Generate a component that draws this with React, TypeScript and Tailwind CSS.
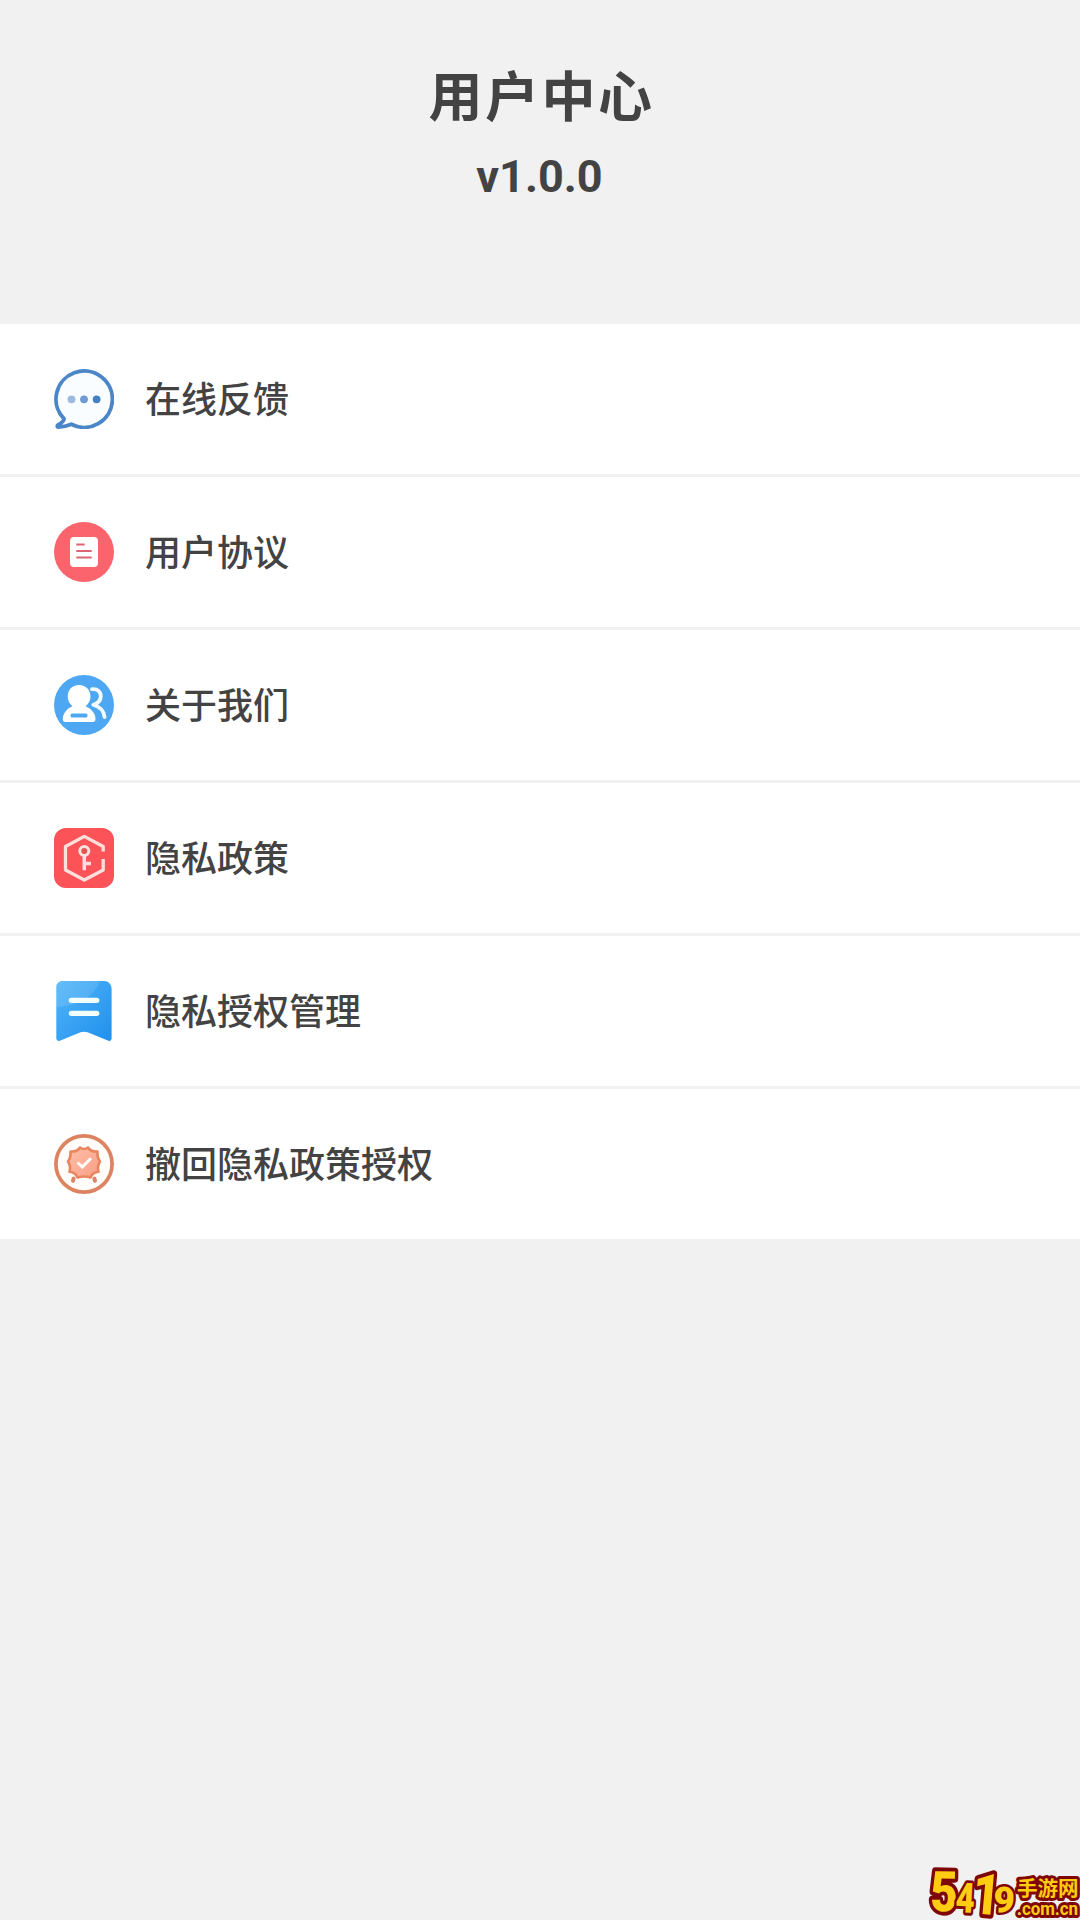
import type { ReactNode } from "react";

type MenuItem = { id: string; label: string; icon: ReactNode };

function FeedbackIcon() {
  return (
    <svg viewBox="0 0 60 60" className="h-[60px] w-[60px] shrink-0" fill="none">
      <path
        d="M10.1 49.9 A28.2 28.2 0 1 1 17.3 55.2 C13 57 8 58 4.4 58 C2.8 57.9 3 56.6 4.4 55.7 C7.5 53.9 10 52.5 10.1 49.9 Z"
        fill="#f9fdff"
        stroke="#4a86c8"
        strokeWidth="3.8"
        strokeLinejoin="round"
      />
      <circle cx="17.5" cy="30.3" r="3.9" fill="#9db9e2" />
      <circle cx="30" cy="30.3" r="3.9" fill="#6f9bd3" />
      <circle cx="42.6" cy="30.3" r="3.9" fill="#4680c4" />
    </svg>
  );
}

function AgreementIcon() {
  return (
    <svg viewBox="0 0 60 60" className="h-[60px] w-[60px] shrink-0" fill="none">
      <circle cx="30" cy="30" r="30" fill="#fb646c" />
      <rect x="16" y="15" width="28" height="30" rx="4" fill="#fff" />
      <path d="M22.3 22.5h8.4M22.3 29h15.4M22.3 35.5h15.4" stroke="#dc6472" strokeWidth="1.9" />
    </svg>
  );
}

function AboutIcon() {
  return (
    <svg viewBox="0 0 60 60" className="h-[60px] w-[60px] shrink-0" fill="none">
      <circle cx="30" cy="30" r="30" fill="#4ea7f2" />
      <path
        d="M25 10 C32 10 36.5 15 36.5 21.5 C36.5 25.5 34.5 29 31.5 31.3 C37 33.5 41.5 38 41.5 44 C41.5 46 40.6 47 38.8 47 H11.5 C9.6 47 8.8 46 8.8 44 C9 38 13 33.5 18.5 31.3 C15.5 29 13.7 25.5 13.7 21.5 C13.7 15 18 10 25 10 Z"
        fill="#fff"
      />
      <rect x="16.5" y="38.5" width="17" height="4" rx="1.6" fill="#4ea7f2" />
      <path
        d="M38 14.2 C43.5 13.4 46.8 17 46.8 21.3 C46.8 25.6 44 28.3 39.3 29.8 C46 31.8 50 36 50.6 42"
        stroke="#f5fbff"
        strokeWidth="3.8"
        strokeLinecap="round"
        strokeLinejoin="round"
      />
    </svg>
  );
}

function PrivacyIcon() {
  return (
    <svg viewBox="0 0 60 60" className="h-[60px] w-[60px] shrink-0" fill="none">
      <rect width="60" height="60" rx="12" fill="#fb5358" />
      <path
        d="M49.2 23.5 V18.5 L30.3 8.4 L11.5 18.5 V42 L30.3 52 L49.2 42 V31"
        stroke="#ffe0dd"
        strokeWidth="3.3"
        strokeLinejoin="round"
      />
      <circle cx="30.3" cy="23" r="4.5" fill="#e05550" stroke="#ffe0dd" strokeWidth="3" />
      <path d="M30.3 28 V42.3 M30.3 35.5 H37" stroke="#ffe0dd" strokeWidth="3.5" />
    </svg>
  );
}

function ManageIcon() {
  return (
    <svg viewBox="0 0 60 60" className="h-[60px] w-[60px] shrink-0" fill="none">
      <defs>
        <linearGradient id="ribbon" x1="0" y1="0" x2="1" y2="1">
          <stop offset="0" stopColor="#50b5f8" />
          <stop offset="1" stopColor="#2090ee" />
        </linearGradient>
      </defs>
      <path
        d="M8.5 0 H50 C54.5 0 57.6 3.5 57.6 8 V57 C57.6 59.5 56 60.5 53.8 59.5 L33.5 51.3 Q30 50 26.5 51.3 L6.5 59.5 C4.3 60.5 2.3 59.5 2.3 57 V6 C2.3 2.5 5 0 8.5 0 Z"
        fill="url(#ribbon)"
      />
      <path d="M2.3 26 C24 25 40 16 46 0 H8.5 C5 0 2.3 2.5 2.3 6 Z" fill="#fff" fillOpacity=".12" />
      <path d="M17.3 19.3 H42.8 M17.3 32.3 H42.8" stroke="#f2fffb" strokeWidth="5.2" strokeLinecap="round" />
    </svg>
  );
}

function RevokeIcon() {
  return (
    <svg viewBox="0 0 60 60" className="h-[60px] w-[60px] shrink-0" fill="none">
      <defs>
        <linearGradient id="seal" x1="0" y1="0" x2="1" y2="1">
          <stop offset="0" stopColor="#fcc0a8" />
          <stop offset="1" stopColor="#fb9c86" />
        </linearGradient>
      </defs>
      <circle cx="30" cy="30" r="28.1" fill="#fffcfa" stroke="#dc8462" strokeWidth="3.7" />
      <path
        d="M26 13.5 Q30 16.5 34 13.5 Q36.500 18 43.500 17.500 Q43 23.500 46 27.500 Q43 32 44.500 37.800 Q38.500 38.500 36.500 43.500 Q30 41.500 23.500 43.500 Q21.500 38.500 15.500 37.800 Q17 32 14 27.500 Q17 23.500 16.500 17.500 Q23.500 18 26 13.500 Z"
        fill="url(#seal)"
        stroke="#e8855f"
        strokeWidth="2.6"
        strokeLinejoin="round"
      />
      <path d="M23.5 28.5 L28.3 33 L37 24.3" stroke="#fff" strokeWidth="3" />
      <path d="M19.6 44.6 L19 46.8 M40.4 44.6 L41 46.8" stroke="#dc8462" strokeWidth="4" strokeLinecap="round" />
    </svg>
  );
}

const ITEMS: MenuItem[] = [
  { id: "feedback", label: "在线反馈", icon: <FeedbackIcon /> },
  { id: "agreement", label: "用户协议", icon: <AgreementIcon /> },
  { id: "about", label: "关于我们", icon: <AboutIcon /> },
  { id: "privacy", label: "隐私政策", icon: <PrivacyIcon /> },
  { id: "manage", label: "隐私授权管理", icon: <ManageIcon /> },
  { id: "revoke", label: "撤回隐私政策授权", icon: <RevokeIcon /> },
];

// Each digit is stretched and tilted on its own for the hand-cut look.
const DIGITS = [
  { char: "5", transform: "translate(2 45) rotate(1) scale(.95 1.12)" },
  { char: "4", transform: "translate(27 46) rotate(3) scale(.66 .83)" },
  { char: "1", transform: "translate(43 47) rotate(5) scale(.95 1.14)" },
  { char: "9", transform: "translate(65 46) rotate(2) scale(.74 .72)" },
];

function SiteMark() {
  return (
    <svg
      viewBox="0 0 152 54"
      className="absolute right-0 bottom-0 h-[54px] w-[152px] overflow-visible"
      fill="#ffcc12"
      stroke="#7d0709"
      strokeLinejoin="round"
      paintOrder="stroke"
      fontFamily="Roboto, sans-serif"
      fontWeight="900"
    >
      {DIGITS.map((d) => (
        <text key={d.char} transform={d.transform} fontSize="50" strokeWidth="7">
          {d.char}
        </text>
      ))}
      <g strokeWidth="6">
        <text x="89" y="30" fontSize="20.5" fontFamily="'Noto Sans CJK SC', sans-serif" fontWeight="700">
          手游网
        </text>
        <text x="89" y="48.5" fontSize="18" textLength="61" lengthAdjust="spacingAndGlyphs" fontWeight="700">
          .com.cn
        </text>
      </g>
    </svg>
  );
}

export default function App() {
  return (
    <div className="relative flex min-h-[1920px] w-full flex-col bg-[#f1f1f1] font-['Roboto','Noto_Sans_CJK_SC',sans-serif] text-[#434343]">
      <header className="flex h-[324px] flex-col items-center pt-[58px]">
        <h1 className="pl-[3px] font-['Noto_Sans_CJK_SC',sans-serif] text-[54px] leading-[72px] font-bold tracking-[2.5px]">
          用户中心
        </h1>
        <p className="mt-[20px] pr-px text-[45px] leading-[53px] font-bold">v1.0.0</p>
      </header>

      <ul className="divide-y-[3px] divide-[#f1f1f1] bg-white">
        {ITEMS.map((item) => (
          <li key={item.id} className="flex h-[153px] items-center gap-[31px] px-[54px] last:h-[150px]">
            {item.icon}
            <span className="pb-[5px] font-['Noto_Sans_CJK_SC',sans-serif] text-[36px] leading-[54px] font-medium">
              {item.label}
            </span>
          </li>
        ))}
      </ul>

      <SiteMark />
    </div>
  );
}
